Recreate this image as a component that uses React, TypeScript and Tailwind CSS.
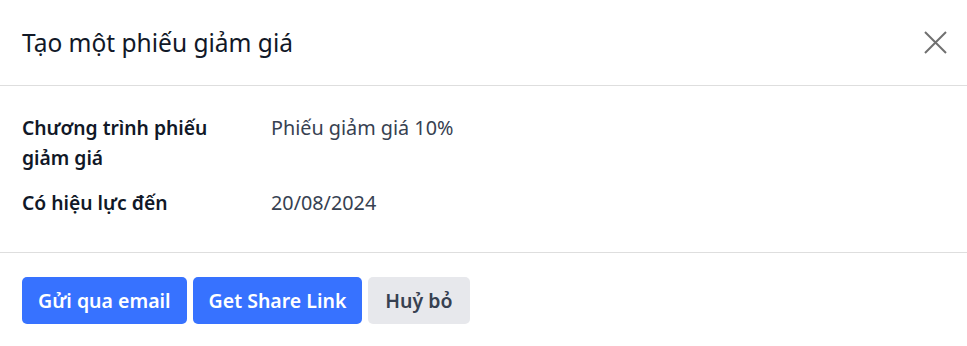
const rows = [
  { label: 'Chương trình phiếu giảm giá', value: 'Phiếu giảm giá 10%' },
  { label: 'Có hiệu lực đến', value: '20/08/2024' },
];

export default function App() {
  return (
    <div className="flex h-[346px] w-[967px] flex-col bg-white font-['Noto_Sans',sans-serif]">
      <div className="flex h-[86px] items-center justify-between border-b border-[#dedede] pl-[22px] pr-[20px]">
        <h1 className="text-[24.5px] leading-8 text-[#111827]">Tạo một phiếu giảm giá</h1>
        <button className="flex h-[23px] w-[23px] items-center justify-center text-[#707070]">
          <svg width="23" height="23" viewBox="0 0 23 23" fill="none" stroke="currentColor" strokeWidth="2">
            <path d="M1 1L22 22M22 1L1 22" />
          </svg>
        </button>
      </div>

      <div className="flex flex-col gap-[15px] border-b border-[#dedede] px-[22px] pt-[27px] pb-[34px]">
        {rows.map((row) => (
          <div key={row.label} className="grid grid-cols-[249px_1fr] leading-[30px]">
            <div className="w-[200px] text-[19.3px] font-semibold text-[#111827]">{row.label}</div>
            <div className="text-[19.8px] text-[#374151]">{row.value}</div>
          </div>
        ))}
      </div>

      <div className="flex gap-[6px] px-[22px] pt-[24px]">
        <button className="h-[47px] rounded-[5px] bg-[#3772ff] px-4 text-[19.5px] font-semibold text-white">Gửi qua email</button>
        <button className="h-[47px] rounded-[5px] bg-[#3772ff] px-4 text-[19.5px] font-semibold text-white">Get Share Link</button>
        <button className="h-[47px] rounded-[5px] bg-[#e7e8ec] px-[17px] text-[19.5px] font-semibold text-[#374151]">Huỷ bỏ</button>
      </div>
    </div>
  );
}
